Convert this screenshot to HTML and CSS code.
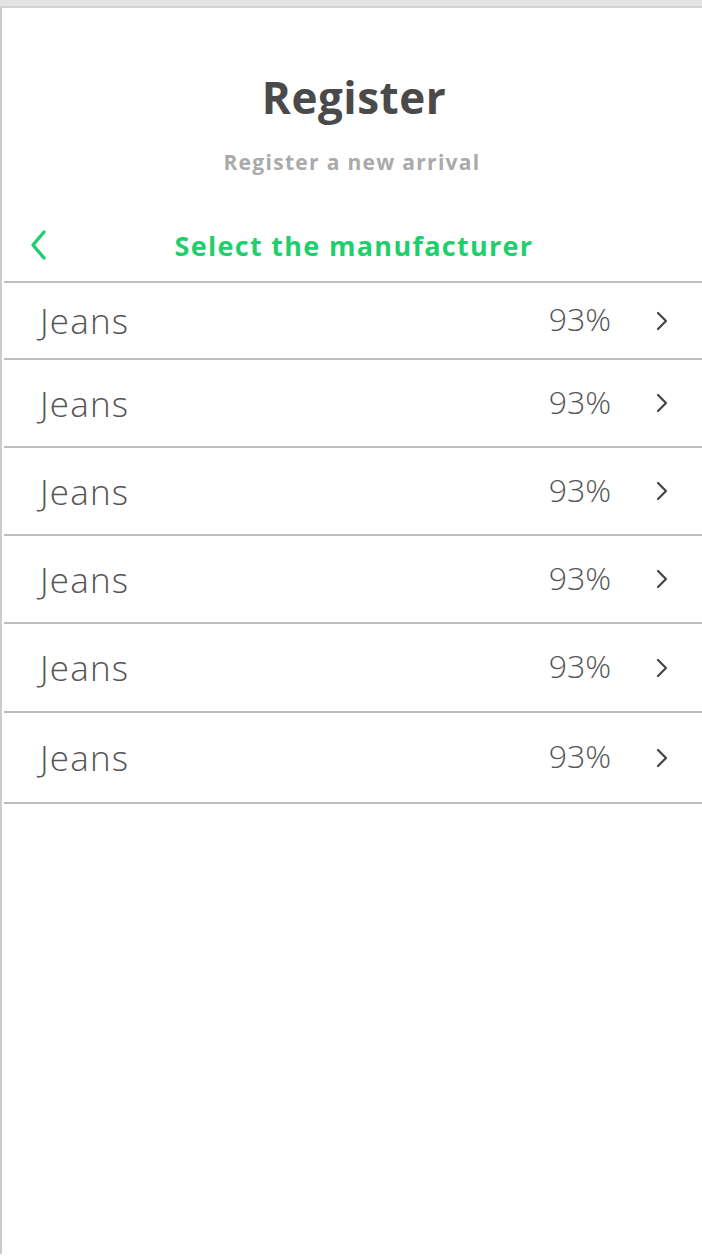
FILE: index.html
```html
<!DOCTYPE html>
<html lang="en">
<head>
<meta charset="utf-8">
<title>Register</title>
<link rel="stylesheet" href="styles.css">
</head>
<body>
<div class="frame">
  <header class="header">
    <h1 class="title">Register</h1>
    <p class="subtitle">Register a new arrival</p>
    <div class="nav">
      <svg class="back" width="18" height="32" viewBox="0 0 18 32"><path d="M15 3 L4 16 L15 29" fill="none" stroke="#1ecf6c" stroke-width="3.4" stroke-linecap="round" stroke-linejoin="round"/></svg>
      <span class="nav-title">Select the manufacturer</span>
    </div>
  </header>
  <ul class="list">
    <li class="row r1"><span class="name">Jeans</span><span class="pct">93%</span><svg class="chev" width="12" height="20" viewBox="0 0 12 20"><path d="M2 2 L10 10 L2 18" fill="none" stroke="#444" stroke-width="2.2" stroke-linecap="round" stroke-linejoin="round"/></svg></li>
    <li class="row"><span class="name">Jeans</span><span class="pct">93%</span><svg class="chev" width="12" height="20" viewBox="0 0 12 20"><path d="M2 2 L10 10 L2 18" fill="none" stroke="#444" stroke-width="2.2" stroke-linecap="round" stroke-linejoin="round"/></svg></li>
    <li class="row"><span class="name">Jeans</span><span class="pct">93%</span><svg class="chev" width="12" height="20" viewBox="0 0 12 20"><path d="M2 2 L10 10 L2 18" fill="none" stroke="#444" stroke-width="2.2" stroke-linecap="round" stroke-linejoin="round"/></svg></li>
    <li class="row"><span class="name">Jeans</span><span class="pct">93%</span><svg class="chev" width="12" height="20" viewBox="0 0 12 20"><path d="M2 2 L10 10 L2 18" fill="none" stroke="#444" stroke-width="2.2" stroke-linecap="round" stroke-linejoin="round"/></svg></li>
    <li class="row r5"><span class="name">Jeans</span><span class="pct">93%</span><svg class="chev" width="12" height="20" viewBox="0 0 12 20"><path d="M2 2 L10 10 L2 18" fill="none" stroke="#444" stroke-width="2.2" stroke-linecap="round" stroke-linejoin="round"/></svg></li>
    <li class="row r6"><span class="name">Jeans</span><span class="pct">93%</span><svg class="chev" width="12" height="20" viewBox="0 0 12 20"><path d="M2 2 L10 10 L2 18" fill="none" stroke="#444" stroke-width="2.2" stroke-linecap="round" stroke-linejoin="round"/></svg></li>
  </ul>
</div>
</body>
</html>
```
FILE: styles.css
```css
html, body {
  margin: 0;
  padding: 0;
  background: #fff;
}
body {
  border-top: 6px solid #e4e4e4;
  font-family: "Open Sans", "Lato", sans-serif;
}
.frame {
  border-top: 2px solid #d2d2d2;
  border-left: 2px solid #cccccc;
  min-height: 1248px;
  box-sizing: border-box;
}
.header {
  padding-top: 64px;
  text-align: center;
}
.title {
  margin: 0 0 0 4px;
  font-size: 44px;
  line-height: 50px;
  font-weight: 700;
  letter-spacing: 0.5px;
  color: #4a4a4a;
}
.subtitle {
  margin: 27px 0 0;
  font-size: 21px;
  line-height: 26px;
  font-weight: 700;
  letter-spacing: 1.3px;
  color: #aaaaaa;
}
.nav {
  margin-top: 40px;
  height: 60px;
  margin-bottom: 6px;
  display: flex;
  align-items: center;
  justify-content: center;
  position: relative;
}
.back {
  position: absolute;
  left: 27px;
  top: 14px;
}
.nav-title {
  font-size: 27px;
  font-weight: 700;
  letter-spacing: 1.3px;
  color: #1ecf6c;
  margin-left: 4px;
}
.list {
  list-style: none;
  margin: 0 0 0 2px;
  padding: 0;
  border-top: 2px solid #bdbdbd;
}
.row {
  display: flex;
  align-items: center;
  height: 86px;
  border-bottom: 2px solid #bdbdbd;
  padding: 0 34px 0 36px;
  color: #555;
  font-weight: 300;
}
.row.r1 { height: 75px; }
.row.r5 { height: 87px; }
.row.r6 { height: 89px; }
.name {
  flex: 1;
  font-size: 35px;
  letter-spacing: 1.2px;
}
.pct {
  font-size: 32px;
  margin-right: 45px;
  position: relative;
  top: -2px;
}
.chev {
  display: block;
}
```
